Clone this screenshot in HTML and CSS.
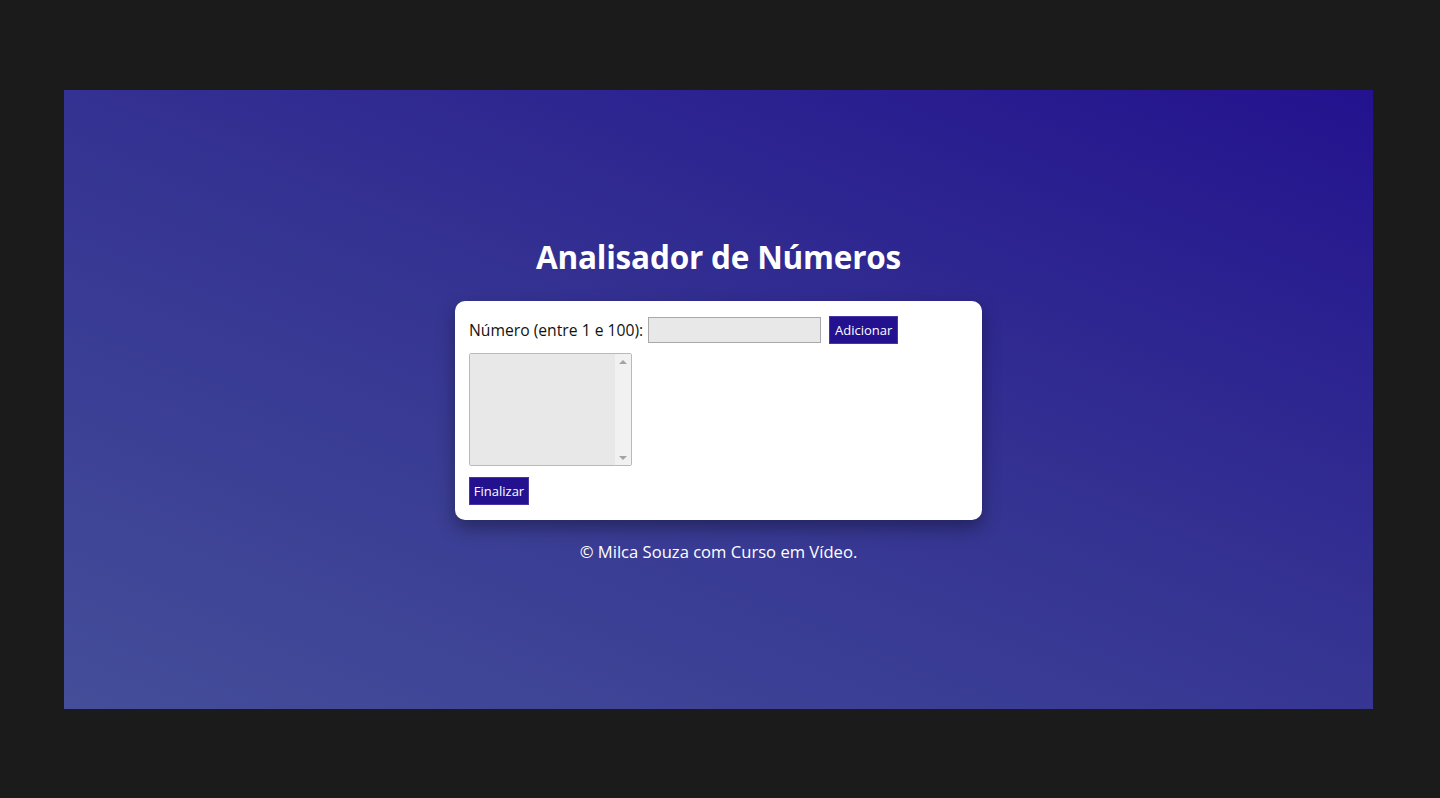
FILE: index.html
```html
<!DOCTYPE html>
<html lang="pt-BR">
<head>
<meta charset="utf-8">
<title>Analisador de Números</title>
<link rel="stylesheet" href="styles.css">
</head>
<body>
<div class="frame">
  <header class="head">
    <h1 class="title">Analisador de Números</h1>
  </header>
  <section class="card">
    <div class="row">
      <label class="label" for="num">Número (entre 1 e 100):</label>
      <input class="field" type="text" id="num">
      <button class="btn btn-add" type="button">Adicionar</button>
    </div>
    <div class="list">
      <div class="list-body"></div>
      <div class="scroll">
        <span class="arrow arrow-up"></span>
        <span class="arrow arrow-down"></span>
      </div>
    </div>
    <div class="row-end">
      <button class="btn btn-end" type="button">Finalizar</button>
    </div>
  </section>
  <footer class="foot">
    <p class="credit">&copy; Milca Souza com Curso em Vídeo.</p>
  </footer>
</div>
</body>
</html>
```

FILE: styles.css
```css
* { box-sizing: border-box; }

html, body {
  margin: 0;
  height: 100%;
}

body {
  background: #1b1b1b;
  padding: 90px 67px 89px 64px;
  font-family: "Open Sans", "Liberation Sans", sans-serif;
}

.frame {
  height: 100%;
  background: linear-gradient(22deg, #444e99 0%, #353492 50%, #23128e 100%);
  display: flex;
  flex-direction: column;
  align-items: center;
  justify-content: center;
  color: #fff;
}

.head { margin-bottom: 24px; }

.title {
  margin: 0;
  font-size: 31.5px;
  font-weight: 700;
  line-height: 40px;
  letter-spacing: -0.2px;
}

.card {
  width: 527px;
  background: #fff;
  border-radius: 10px;
  padding: 15px 14px 15px 14px;
  color: #111;
  box-shadow: 0 8px 18px rgba(0, 0, 0, 0.35);
}

.row {
  display: flex;
  align-items: center;
  height: 28px;
}

.label {
  font-size: 15.7px;
  margin-right: 5px;
}

.field {
  width: 173px;
  height: 26px;
  background: #e8e8e8;
  border: 1px solid #a8a8a8;
  margin: 0 8px 0 0;
  padding: 0 4px;
  font: inherit;
}

.btn {
  background: #23118f;
  color: #fff;
  border: 1px solid #4637a6;
  font-family: inherit;
  font-size: 13px;
  font-weight: 500;
  padding: 0 3px;
  height: 28px;
  margin: 0;
  cursor: pointer;
}

.btn-add { width: 69px; }
.btn-end { width: 60px; }

.list {
  margin-top: 9px;
  width: 163px;
  height: 113px;
  border: 1px solid #b9b9b9;
  border-radius: 2px;
  display: flex;
  overflow: hidden;
}

.list-body {
  flex: 1;
  background: #e8e8e8;
}

.scroll {
  width: 16px;
  background: #f1f1f1;
  display: flex;
  flex-direction: column;
  justify-content: space-between;
  align-items: center;
  padding: 6px 0 5px;
}

.arrow {
  width: 0;
  height: 0;
  border-left: 4px solid transparent;
  border-right: 4px solid transparent;
}

.arrow-up { border-bottom: 4px solid #a3a3a3; }
.arrow-down { border-top: 4px solid #a3a3a3; }

.row-end {
  margin-top: 11px;
  display: flex;
}

.foot { margin-top: 22px; }

.credit {
  margin: 0;
  font-size: 16.6px;
  line-height: 20px;
}
```
